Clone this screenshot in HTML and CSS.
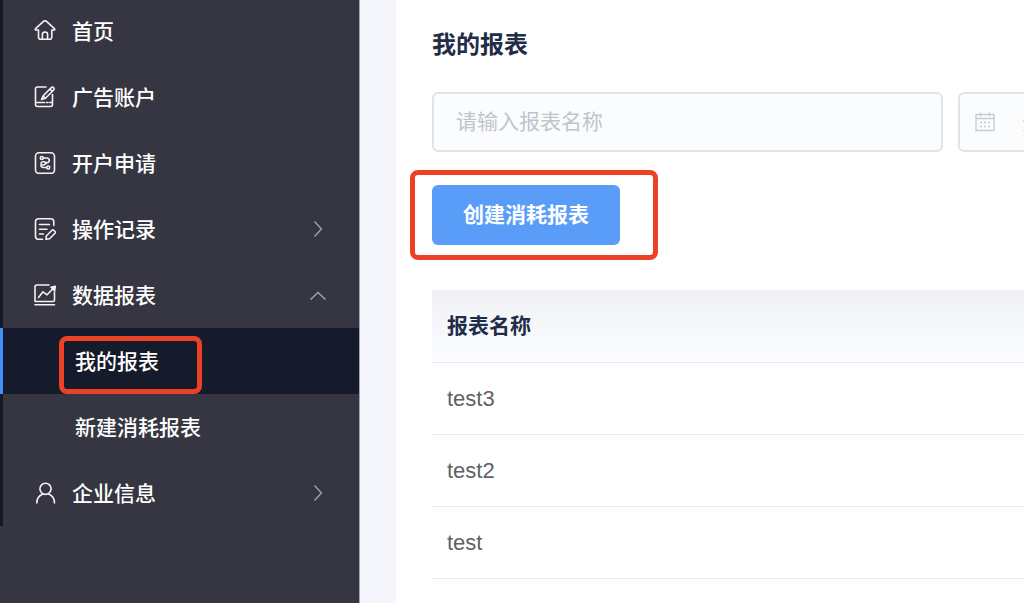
FILE: index.html
```
<!DOCTYPE html>
<html lang="zh-CN">
<head>
<meta charset="utf-8">
<meta name="viewport" content="width=device-width, initial-scale=1">
<title>我的报表</title>
<link rel="stylesheet" href="styles.css">
</head>
<body>
<div class="app">
  <aside class="sidebar">
    <nav class="menu">
      <a class="item" href="#">
        <svg class="icon" viewBox="0 0 22 22"><path d="M4.500 10H1.400Q1 9 1.800 8.300L9.500 1.300Q11 0.200 12.500 1.300L20.200 8.300Q21 9 20.600 10H17.800V17Q17.800 19.300 15.500 19.300H6.800Q4.500 19.300 4.500 17Z"/><path d="M8.400 19V14.500Q8.400 12 11 12T13.600 14.500V19"/></svg>
        <span>首页</span>
      </a>
      <a class="item" href="#">
        <svg class="icon" viewBox="0 0 22 22"><path d="M12 1H3.500Q1.500 1 1.500 3V18.500Q1.500 20.500 3.500 20.500H16.500Q18.500 20.500 18.500 18.500V8.500M1.500 16.500H10.500M12.500 16.500H14M15.800 16.500H18.500"/><path d="M7.500 13.500 9 10 17.300 1.600Q18.300 0.600 19.500 1.600T19.700 4L11.500 12.300ZM9 10 11.500 12.300M16 3.100 18.200 5.300"/></svg>
        <span>广告账户</span>
      </a>
      <a class="item" href="#">
        <svg class="icon" viewBox="0 0 22 22"><rect x="1.500" y="0.800" width="19" height="20.600" rx="3.500"/><circle cx="7.800" cy="6" r="1.500"/><circle cx="14.200" cy="15.500" r="1.500"/><path d="M9.400 6H12.800Q15.300 6.200 15.300 8.300T12.800 10.800L10 9.800Q7 9.500 7 11.500T10 12.800L12.500 11M12.600 15.500H9.500Q7 15.500 7 13.500"/></svg>
        <span>开户申请</span>
      </a>
      <a class="item" href="#">
        <svg class="icon" viewBox="0 0 22 22"><path d="M19.800 7.500V3.800Q19.800 0.800 16.800 0.800H4.500Q1.500 0.800 1.500 3.800V18.300Q1.500 21.300 4.500 21.300H8.500M5.500 6.500H15.500M5.500 11.300H13M5.500 16H9.500"/><path d="M12.300 18 18 12.300Q19 11.500 20 12.500L21 13.500Q21.700 14.300 21 15.300L15.500 20.800 12 21.300Z"/></svg>
        <span>操作记录</span>
        <svg class="arrow" viewBox="0 0 20 20"><path d="M6.500 2.500 13.500 10 6.500 17.500"/></svg>
      </a>
      <a class="item" href="#">
        <svg class="icon" viewBox="0 0 22 22"><path d="M15 1H3Q1 1 1 3V17.500H19Q20.500 17.500 20.500 16V8M1 20.800H20.500"/><path d="M4.500 13.500 9 7.800 13 10.800 19 4.800"/><path class="solid" d="M17 3.300 21.300 2.300 20.600 6.800Z"/></svg>
        <span>数据报表</span>
        <svg class="arrow" viewBox="0 0 20 20"><path d="M2.500 14.500 10 7.500 17.500 14.500"/></svg>
      </a>
      <a class="item sub active" href="#" aria-current="page"><span class="marked">我的报表</span></a>
      <a class="item sub" href="#"><span>新建消耗报表</span></a>
      <a class="item" href="#">
        <svg class="icon" viewBox="0 0 22 22"><circle cx="11.500" cy="6.800" r="5.600"/><path d="M8.800 12Q2.800 14.500 2.800 21M14.800 12Q20.500 14.500 20.500 21"/></svg>
        <span>企业信息</span>
        <svg class="arrow" viewBox="0 0 20 20"><path d="M6.500 2.500 13.500 10 6.500 17.500"/></svg>
      </a>
    </nav>
  </aside>
  <main class="content">
    <h1 class="title">我的报表</h1>
    <form class="filters">
      <input class="field name" type="text" placeholder="请输入报表名称" aria-label="报表名称">
      <label class="field date">
        <svg class="calendar" viewBox="0 0 20 20"><path d="M1 2.500H19V18.500H1ZM1 6.500H19M5.500 0.500V4.500M14.500 0.500V4.500M5 10.500H7M9 10.500H11M13 10.500H15M5 14.500H7M9 14.500H11M13 14.500H15"/></svg>
        <input class="date-input" type="text" placeholder="开始日期" aria-label="开始日期">
      </label>
    </form>
    <div class="actions"><span class="marked"><button class="primary" type="button">创建消耗报表</button></span></div>
    <table class="reports">
      <thead><tr><th scope="col">报表名称</th></tr></thead>
      <tbody>
        <tr><td>test3</td></tr>
        <tr><td>test2</td></tr>
        <tr><td>test</td></tr>
      </tbody>
    </table>
  </main>
</div>
</body>
</html>
```
FILE: styles.css
```
* {
  box-sizing: border-box;
}

body {
  margin: 0;
  overflow: hidden;
  background: #f5f6fb;
  font-family: "Liberation Sans", "Noto Sans CJK SC", sans-serif;
  font-size: 21px;
  line-height: 30px;
}

.app {
  display: flex;
  min-height: 100vh;
}

.sidebar {
  flex: none;
  width: 360px;
  border-right: 1px solid #a5a6ac;
  background: #353641;
}

.menu {
  margin-top: -2px;
}

.item {
  display: flex;
  align-items: center;
  gap: 16px;
  height: 66px;
  padding: 0 31px;
  border-left: 3px solid #131a2b;
  color: #fff;
  font-weight: 500;
  text-decoration: none;
}

.item span {
  padding-top: 2px;
}

.sub {
  padding-left: 72px;
}

.active {
  border-left-color: #448ef7;
  background: #151b2a;
}

.icon {
  flex: none;
  width: 22px;
  height: 22px;
  fill: none;
  stroke: #f2f2f3;
  stroke-width: 1.6;
  stroke-linejoin: round;
  stroke-linecap: round;
}

.icon .solid {
  fill: #f2f2f3;
}

.arrow {
  width: 20px;
  height: 20px;
  margin-left: auto;
  fill: none;
  stroke: #a7a8ae;
  stroke-width: 1.3;
}

.marked {
  position: relative;
}

.marked::after {
  content: "";
  position: absolute;
  border: 5px solid #ec4126;
  border-radius: 8px;
  pointer-events: none;
}

.sub .marked::after {
  inset: -9px -43px -17px -16px;
}

.actions .marked::after {
  inset: -15px -38px -15px -22px;
}

.content {
  flex: 1;
  min-width: 0;
  margin-left: 36px;
  padding: 27px 0 0 36px;
  overflow: hidden;
  background: #fff;
}

.title {
  margin: 0 0 29px;
  color: #1f2d48;
  font-size: 24px;
  font-weight: 700;
  line-height: 36px;
}

.filters {
  display: flex;
  gap: 15px;
}

.field {
  flex: none;
  height: 60px;
  border: 2px solid #e1e3ea;
  border-radius: 6px;
  background: #fbfcfe;
}

.name {
  width: 511px;
  padding: 0 22px;
  color: #606266;
  font: inherit;
}

.date {
  display: flex;
  align-items: center;
  gap: 27px;
  width: 520px;
  padding: 0 15px;
}

.calendar {
  flex: none;
  width: 20px;
  height: 20px;
  fill: none;
  stroke: #c8cad2;
  stroke-width: 1.3;
}

.date-input {
  flex: 1;
  min-width: 0;
  padding: 0;
  border: 0;
  background: transparent;
  color: #606266;
  font: inherit;
}

::placeholder {
  color: #c0c4cc;
  opacity: 1;
}

.actions {
  display: flex;
  margin: 33px 0 45px;
}

.primary {
  display: block;
  height: 60px;
  padding: 0 31px;
  border: 0;
  border-radius: 6px;
  background: #599df9;
  color: #fff;
  font: inherit;
  font-weight: 700;
}

.reports {
  width: 100%;
  border-collapse: separate;
  border-spacing: 0;
}

.reports th,
.reports td {
  height: 72px;
  padding: 0 15px;
  border-bottom: 1px solid #e6e9f3;
  color: #606266;
  font-size: 22px;
  text-align: left;
}

.reports th {
  height: 73px;
  background: linear-gradient(#f0f1f6, #fcfdff);
  color: #1f2d48;
  font-size: 21px;
  font-weight: 700;
}
```
